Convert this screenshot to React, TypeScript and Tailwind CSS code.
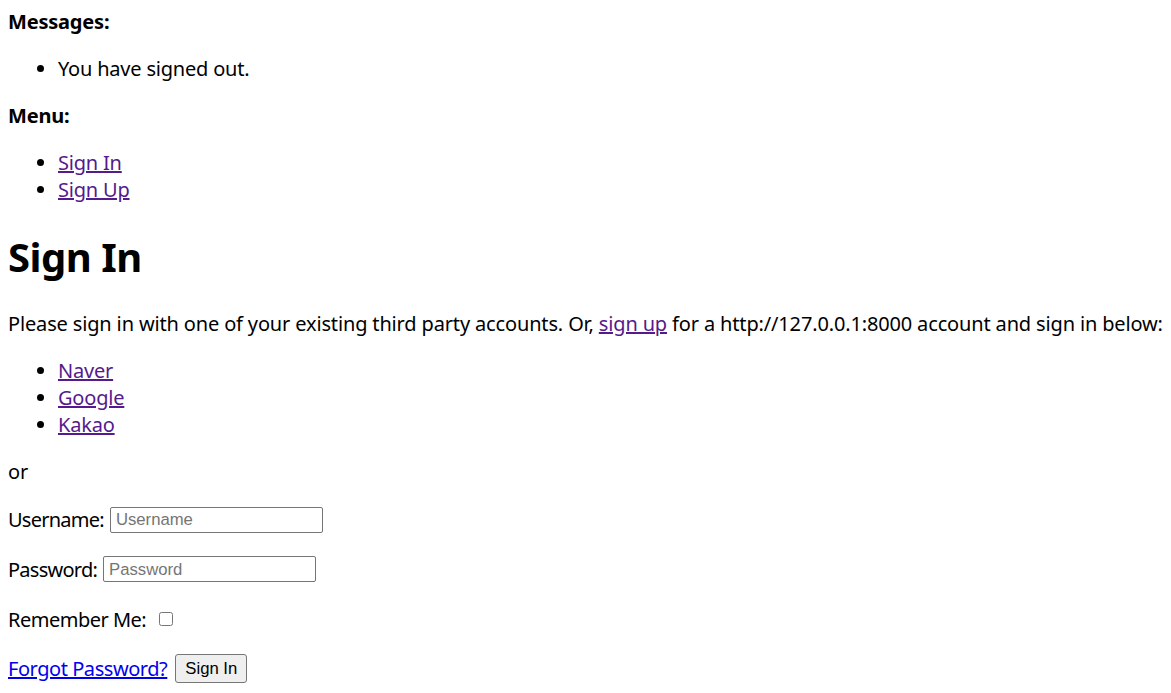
export default function App() {
  return (
    <div className="min-h-screen bg-white p-2 text-[20px] leading-[27px] tracking-[-0.2px] text-black font-['Noto_Sans','Noto_Sans_CJK_KR',sans-serif]">
      {/* messages */}
      <div>
        <strong className="font-bold">Messages:</strong>
        <ul className="my-[20px] list-disc pl-[50px]">
          <li>You have signed out.</li>
        </ul>
      </div>

      {/* menu */}
      <div>
        <strong className="font-bold">Menu:</strong>
        <ul className="my-[20px] list-disc pl-[50px]">
          <li>
            <a href="#" className="text-[#551a8b] underline">Sign In</a>
          </li>
          <li>
            <a href="#" className="text-[#551a8b] underline">Sign Up</a>
          </li>
        </ul>
      </div>

      <h1 className="mt-[27px] mb-[27px] text-[40px] leading-[53px] font-bold tracking-[-0.5px]">Sign In</h1>

      <p className="my-[20px] whitespace-nowrap tracking-[-0.15px]">
        Please sign in with one of your existing third party accounts. Or,{" "}
        <a href="#" className="text-[#551a8b] underline">sign up</a> for a http://127.0.0.1:8000 account and sign in below:
      </p>

      <ul className="my-[20px] list-disc pl-[50px]">
        <li>
          <a href="#" className="text-[#551a8b] underline">Naver</a>
        </li>
        <li>
          <a href="#" className="text-[#551a8b] underline">Google</a>
        </li>
        <li>
          <a href="#" className="text-[#551a8b] underline">Kakao</a>
        </li>
      </ul>

      <p className="my-[20px]">or</p>

      <form>
        <p className="my-[20px] flex h-[29px] items-center">
          <label className="tracking-[-0.75px]">Username:</label>
          <input
            type="text"
            placeholder="Username"
            className="ml-[6px] h-[26px] w-[213px] rounded-[2px] border border-[#767676] px-[5px] text-[16.7px] tracking-normal font-['Liberation_Sans',Arial,sans-serif] placeholder:text-[#757575]"
          />
        </p>
        <p className="my-[20px] flex h-[30px] items-center">
          <label className="tracking-[-0.75px]">Password:</label>
          <input
            type="password"
            placeholder="Password"
            className="ml-[6px] h-[26px] w-[213px] rounded-[2px] border border-[#767676] px-[5px] text-[16.7px] tracking-normal font-['Liberation_Sans',Arial,sans-serif] placeholder:text-[#757575]"
          />
        </p>
        <p className="my-[20px] flex h-[30px] items-center">
          <label className="tracking-[-0.5px]">Remember Me:</label>
          <input type="checkbox" className="ml-[13px] h-[14px] w-[14px]" />
        </p>
        <p className="my-[20px] flex h-[29px] items-center">
          <a href="#" className="tracking-[-0.45px] text-[#0000ee] underline">Forgot Password?</a>
          <button
            type="button"
            className="ml-[8px] h-[29px] w-[72px] rounded-[3px] border border-[#767676] bg-[#efefef] text-[16.7px] tracking-normal font-['Liberation_Sans',Arial,sans-serif]"
          >
            Sign In
          </button>
        </p>
      </form>
    </div>
  )
}
